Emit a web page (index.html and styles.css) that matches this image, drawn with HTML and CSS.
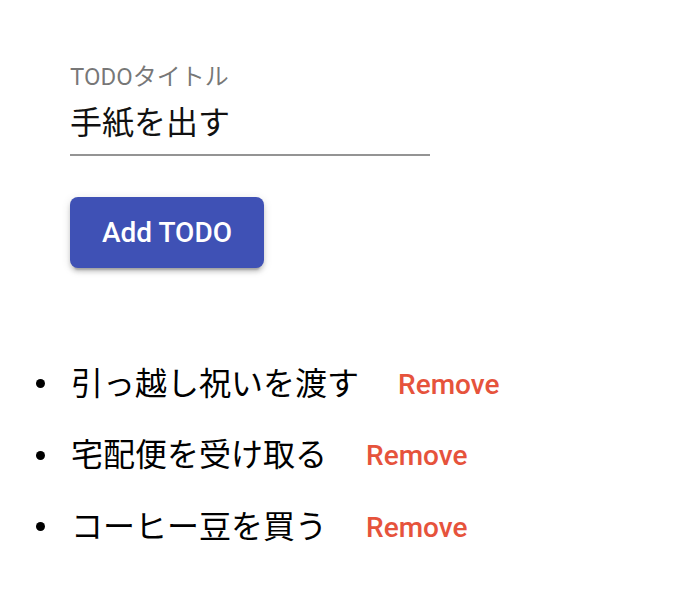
FILE: index.html
```html
<!DOCTYPE html>
<html lang="ja">
<head>
<meta charset="utf-8">
<title>TODO</title>
<link rel="stylesheet" href="styles.css">
</head>
<body>
<div class="page">
  <form class="form">
    <label class="field">
      <span class="field-label">TODOタイトル</span>
      <input class="field-input" type="text" value="手紙を出す">
    </label>
    <button type="button" class="add-btn">Add TODO</button>
  </form>
  <ul class="todo-list">
    <li class="todo-item"><span class="todo-text">引っ越し祝いを渡す</span><button type="button" class="remove-btn">Remove</button></li>
    <li class="todo-item"><span class="todo-text">宅配便を受け取る</span><button type="button" class="remove-btn">Remove</button></li>
    <li class="todo-item"><span class="todo-text">コーヒー豆を買う</span><button type="button" class="remove-btn">Remove</button></li>
  </ul>
</div>
</body>
</html>
```

FILE: styles.css
```css
html, body {
  margin: 0;
  padding: 0;
  background: #ffffff;
}

body {
  font-family: Roboto, "Noto Sans CJK JP", sans-serif;
  color: rgba(0, 0, 0, 0.87);
}

.page {
  padding-top: 58px;
}

.form {
  padding-left: 70px;
  display: flex;
  flex-direction: column;
  align-items: flex-start;
}

.field {
  display: flex;
  flex-direction: column;
  width: 360px;
}

.field-label {
  font-size: 24px;
  line-height: 24px;
  height: 24px;
  margin-top: 7px;
  margin-bottom: 1px;
  color: rgba(0, 0, 0, 0.54);
}

.field-input {
  font-family: Roboto, "Noto Sans CJK JP", sans-serif;
  font-size: 32px;
  color: #111111;
  height: 38px;
  padding: 11px 0 15px;
  margin: 0;
  border: none;
  border-bottom: 2px solid rgba(0, 0, 0, 0.42);
  outline: none;
  background: transparent;
  box-sizing: content-box;
}

.add-btn {
  margin-top: 41px;
  height: 71px;
  padding: 0 32px;
  border: none;
  border-radius: 8px;
  background: #3f51b5;
  color: #ffffff;
  font-family: Roboto, "Noto Sans CJK JP", sans-serif;
  font-size: 28px;
  font-weight: 500;
  line-height: 1;
  box-shadow: 0 6px 2px -4px rgba(0, 0, 0, 0.2), 0 4px 4px 0 rgba(0, 0, 0, 0.14), 0 2px 10px 0 rgba(0, 0, 0, 0.12);
}

.todo-list {
  list-style: none;
  margin: 80px 0 0;
  padding: 0;
}

.todo-item {
  display: flex;
  align-items: center;
  height: 71.5px;
  padding-left: 36px;
}

.todo-item::before {
  content: "";
  width: 9px;
  height: 9px;
  border-radius: 50%;
  background: #000000;
  margin-right: 26px;
  flex: none;
}

.todo-text {
  font-size: 32px;
  line-height: 40px;
  color: #000000;
}

.remove-btn {
  margin-left: 23px;
  padding: 0 16px;
  border: none;
  background: transparent;
  color: #e6533c;
  font-family: Roboto, sans-serif;
  font-size: 28px;
  font-weight: 500;
  line-height: 40px;
  margin-top: 2px;
}
```
